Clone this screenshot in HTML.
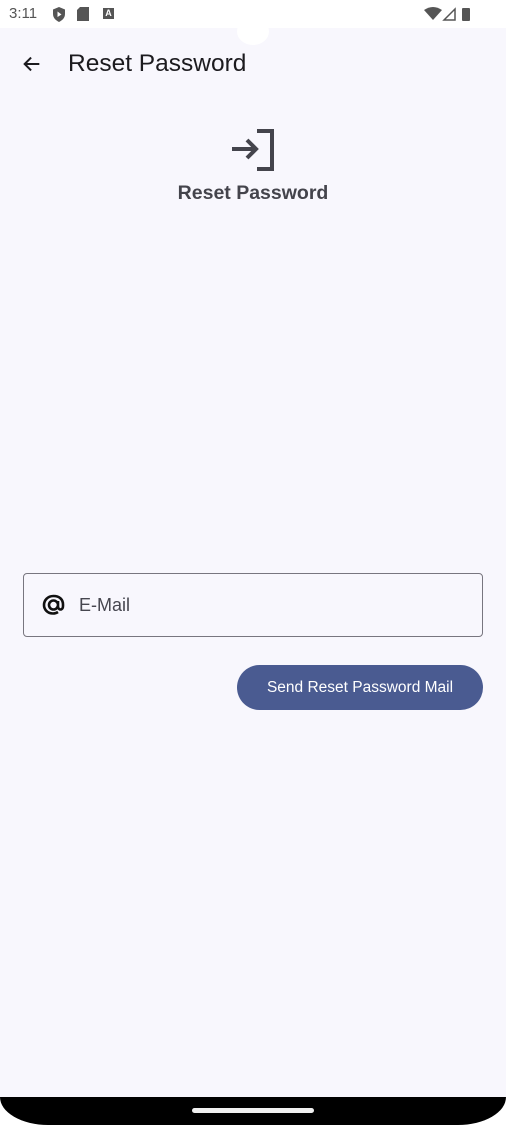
<!DOCTYPE html>
<html><head><meta charset="utf-8"><style>
body{margin:0;width:506px;height:1125px;position:relative;background:#fff;font-family:"Liberation Sans",sans-serif;overflow:hidden}
.app{position:absolute;top:28px;left:0;width:506px;height:1069px;background:#f8f7fd}
.notch{position:absolute;left:237px;top:18px;width:32px;height:27px;border-radius:50%;background:#fff}
.bottom{position:absolute;left:0;top:1097px;width:506px;height:28px;background:#000;border-radius:0 0 48px 48px/0 0 28px 28px}
.pill{position:absolute;left:192px;top:1108px;width:122px;height:5px;border-radius:3px;background:#f0f0f0}
.t{position:absolute;white-space:nowrap}
</style></head><body>
<div class="app"></div>
<div class="notch"></div>
<div class="t" style="left:9px;top:5px;font-size:15px;color:#555">3:11</div>
<svg style="position:absolute;left:52px;top:7px" width="14" height="15" viewBox="0 0 14 15"><path d="M7 0L13 2.5V7C13 11 10 13.5 7 15C4 13.5 1 11 1 7V2.5Z" fill="#555"/><path d="M5.5 4.5L9.5 7.5L5.5 10Z" fill="#fff"/></svg>
<svg style="position:absolute;left:77px;top:7px" width="12" height="14"><path d="M3 0H12V14H0V3Z" fill="#555"/></svg>
<div style="position:absolute;left:103px;top:8px;width:11px;height:11px;background:#555;color:#fff;font-size:9px;font-weight:bold;text-align:center;line-height:11px">A</div>
<svg style="position:absolute;left:424px;top:7px" width="52" height="14"><path d="M0 3Q9 -3 18 3L9 13Z" fill="#555"/><path d="M20 13L31 2V13Z" fill="none" stroke="#555" stroke-width="1.5"/><rect x="38" y="1" width="8" height="13" rx="1" fill="#555"/></svg>
<svg style="position:absolute;left:21px;top:53px" width="22" height="22" viewBox="0 0 24 24"><path d="M20 12H5M11 5L4 12L11 19" fill="none" stroke="#1c1b1f" stroke-width="2.2"/></svg>
<div class="t" style="left:68px;top:50px;font-size:24.5px;color:#1c1b1f">Reset Password</div>
<svg style="position:absolute;left:231px;top:129px" width="44" height="42" viewBox="0 0 44 42"><path d="M1 20H25M16 11L25 20L16 29" fill="none" stroke="#44444c" stroke-width="4"/><path d="M26 2H41V40H26" fill="none" stroke="#44444c" stroke-width="4"/></svg>
<div class="t" style="left:0;width:506px;text-align:center;top:182px;font-size:19.5px;font-weight:bold;color:#44444c">Reset Password</div>
<div style="position:absolute;left:23px;top:573px;width:458px;height:62px;border:1px solid #78767f;border-radius:4px"></div>
<svg style="position:absolute;left:42px;top:594px" width="24" height="22" viewBox="0 0 24 22"><path d="M16 18C14.5 19 13 19.5 11 19.5C5.5 19.5 2 15.5 2 11S5.5 2 11.5 2S21 5.5 21 10.5V12C21 14 20 15.5 18.5 15.5S16 14 16 12V7M16 11A4.5 4.5 0 1 1 7 11A4.5 4.5 0 1 1 16 11Z" fill="none" stroke="#111" stroke-width="2.6"/></svg>
<div class="t" style="left:79px;top:595px;font-size:18px;color:#46464f">E-Mail</div>
<div style="position:absolute;left:237px;top:665px;width:246px;height:45px;border-radius:23px;background:#4a5b91;color:#fff;font-size:15.5px;text-align:center;line-height:45px">Send Reset Password Mail</div>
<div class="bottom"></div><div class="pill"></div>
</body></html>
